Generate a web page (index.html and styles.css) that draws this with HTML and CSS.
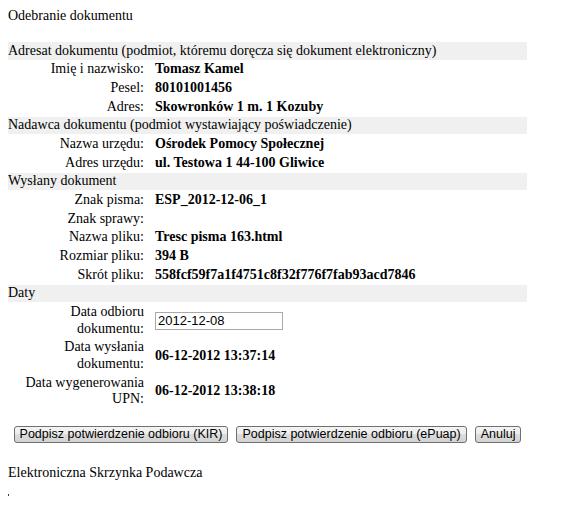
FILE: index.html
```html
<!DOCTYPE html>
<html lang="pl">
<head>
    <meta charset="UTF-8">
    <title>Odebranie dokumentu</title>
    <link rel="stylesheet" href="styles.css">
</head>
<body>

    <div class="title">Odebranie dokumentu</div>

    <table class="details">
        <tr class="section"><td colspan="2">Adresat dokumentu (podmiot, któremu doręcza się dokument elektroniczny)</td></tr>
        <tr><td class="label">Imię i nazwisko:</td><td class="value">Tomasz Kamel</td></tr>
        <tr><td class="label">Pesel:</td><td class="value">80101001456</td></tr>
        <tr><td class="label">Adres:</td><td class="value">Skowronków 1 m. 1 Kozuby</td></tr>

        <tr class="section"><td colspan="2">Nadawca dokumentu (podmiot wystawiający poświadczenie)</td></tr>
        <tr><td class="label">Nazwa urzędu:</td><td class="value">Ośrodek Pomocy Społecznej</td></tr>
        <tr><td class="label">Adres urzędu:</td><td class="value">ul. Testowa 1 44-100 Gliwice</td></tr>

        <tr class="section"><td colspan="2">Wysłany dokument</td></tr>
        <tr><td class="label">Znak pisma:</td><td class="value">ESP_2012-12-06_1</td></tr>
        <tr><td class="label">Znak sprawy:</td><td class="value"></td></tr>
        <tr><td class="label">Nazwa pliku:</td><td class="value">Tresc pisma 163.html</td></tr>
        <tr><td class="label">Rozmiar pliku:</td><td class="value">394 B</td></tr>
        <tr><td class="label">Skrót pliku:</td><td class="value">558fcf59f7a1f4751c8f32f776f7fab93acd7846</td></tr>

        <tr class="section"><td colspan="2">Daty</td></tr>
        <tr><td class="label">Data odbioru dokumentu:</td><td class="value"><input type="text" id="receive-date" value="2012-12-08"></td></tr>
        <tr><td class="label">Data wysłania dokumentu:</td><td class="value">06-12-2012 13:37:14</td></tr>
        <tr><td class="label">Data wygenerowania UPN:</td><td class="value">06-12-2012 13:38:18</td></tr>
    </table>

    <div class="actions">
        <button type="button">Podpisz potwierdzenie odbioru (KIR)</button>
        <button type="button">Podpisz potwierdzenie odbioru (ePuap)</button>
        <button type="button">Anuluj</button>
    </div>

    <div class="footer">Elektroniczna Skrzynka Podawcza</div>
    <div class="dot"></div>

</body>
</html>
```

FILE: styles.css
```css
body {
    margin: 7px 8px;
    font-family: "Liberation Serif", "Times New Roman", serif;
    font-size: 14px;
    line-height: 17px;
    color: #000;
    background: #fff;
}

.title {
    margin-bottom: 17px;
}

.details {
    width: 519px;
    border-collapse: separate;
    border-spacing: 0 1px;
    font-size: 14px;
}

.details td {
    padding: 0.5px 0;
    line-height: 16.67px;
}

.section td {
    background-color: #f0f0f0;
}

.label {
    width: 136px;
    text-align: right;
    vertical-align: middle;
}

.value {
    padding-left: 11px !important;
    font-weight: bold;
    vertical-align: middle;
}

#receive-date {
    box-sizing: border-box;
    width: 128px;
    height: 18px;
    margin: 0;
    padding: 1px 2px;
    border: 1px solid #a9a9a9;
    font-family: "Liberation Sans", Arial, sans-serif;
    font-size: 13px;
    color: #000;
    vertical-align: middle;
}

.actions {
    width: 519px;
    margin-top: 17px;
    display: flex;
    justify-content: center;
    gap: 8px;
}

.actions button {
    flex: none;
    height: 17px;
    padding: 0 5px;
    border: 1px solid #707070;
    border-radius: 3px;
    background: linear-gradient(#f4f4f4, #ececec 50%, #dcdcdc 50%, #d2d2d2);
    font-family: "Liberation Sans", Arial, sans-serif;
    font-size: 12.5px;
    line-height: 15px;
    white-space: nowrap;
    color: #000;
    cursor: pointer;
}

.footer {
    margin-top: 21px;
}

.dot {
    width: 2px;
    height: 2px;
    margin: 13px 0 0 -1px;
    background: #2f3a55;
}
```
